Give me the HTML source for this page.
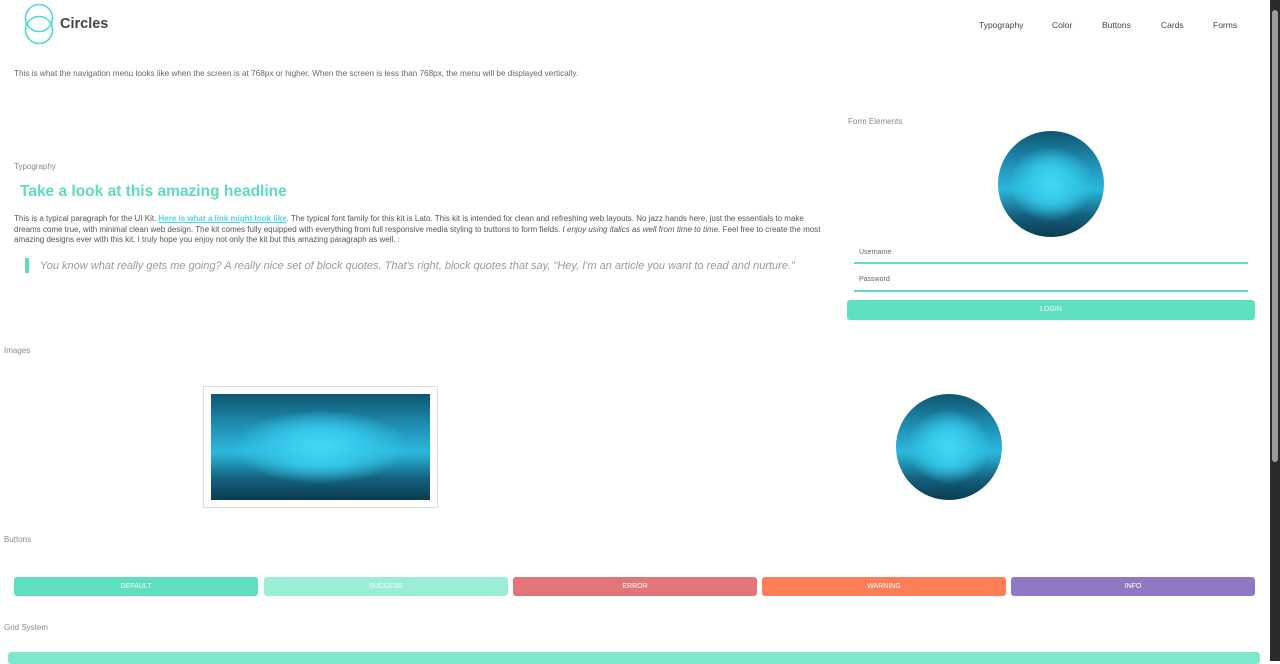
<!DOCTYPE html>
<html><head><meta charset="utf-8"><style>
*{margin:0;padding:0;box-sizing:border-box}
body{width:1280px;height:661px;overflow:hidden;background:#fff;font-family:"Liberation Sans",sans-serif;color:#666;position:relative}
.a{position:absolute;white-space:nowrap}
.lbl{font-size:8px;color:#888}
.wave{background:radial-gradient(ellipse 40% 35% at 50% 50%,#45d8f5 0%,#33c6e8 50%,transparent 100%),linear-gradient(180deg,#0e5670 0%,#1f8fb3 30%,#2bb8dc 55%,#14607c 80%,#0b3c52 100%)}
.btn{position:absolute;top:577px;height:19px;border-radius:3px;color:#fff;font-size:7px;text-align:center;line-height:19px;width:244px}
</style></head><body>
<svg class="a" style="left:23px;top:3px" width="32" height="43"><circle cx="16" cy="15" r="13.5" fill="none" stroke="#4dd4e8" stroke-width="1.6"/><circle cx="16" cy="27" r="13.5" fill="none" stroke="#4ddcc0" stroke-width="1.6"/></svg>
<div class="a" style="left:60px;top:16px;font-size:14.5px;font-weight:bold;color:#444">Circles</div>
<div class="a" style="left:979px;top:20px;font-size:8.5px;color:#444">Typography</div>
<div class="a" style="left:1052px;top:20px;font-size:8.5px;color:#444">Color</div>
<div class="a" style="left:1102px;top:20px;font-size:8.5px;color:#444">Buttons</div>
<div class="a" style="left:1161px;top:20px;font-size:8.5px;color:#444">Cards</div>
<div class="a" style="left:1213px;top:20px;font-size:8.5px;color:#444">Forms</div>
<div class="a" style="left:14px;top:69px;font-size:8.2px;color:#666">This is what the navigation menu looks like when the screen is at 768px or higher. When the screen is less than 768px, the menu will be displayed vertically.</div>
<div class="a lbl" style="left:14px;top:162px">Typography</div>
<div class="a" style="left:20px;top:183px;font-size:15.5px;font-weight:bold;color:#5ddbbe">Take a look at this amazing headline</div>
<div class="a" style="left:14px;top:214px;width:815px;white-space:normal;font-size:8px;line-height:10.5px;color:#555">This is a typical paragraph for the UI Kit. <u style="color:#4dd4e8;font-weight:bold">Here is what a link might look like</u>. The typical font family for this kit is Lato. This kit is intended for clean and refreshing web layouts. No jazz hands here, just the essentials to make dreams come true, with minimal clean web design. The kit comes fully equipped with everything from full responsive media styling to buttons to form fields. <i>I enjoy using italics as well from time to time.</i> Feel free to create the most amazing designs ever with this kit. I truly hope you enjoy not only the kit but this amazing paragraph as well. :</div>
<div class="a" style="left:25px;top:258px;width:4px;height:15px;background:#5ddbbe"></div>
<div class="a" style="left:40px;top:260px;font-size:11px;font-style:italic;color:#999">You know what really gets me going? A really nice set of block quotes. That's right, block quotes that say, "Hey, I'm an article you want to read and nurture."</div>
<div class="a lbl" style="left:848px;top:117px">Form Elements</div>
<div class="a wave" style="left:998px;top:131px;width:106px;height:106px;border-radius:50%"></div>
<div class="a" style="left:859px;top:249px;font-size:7px;color:#666">Username</div>
<div class="a" style="left:854px;top:262px;width:394px;height:2px;background:#5ddbbe"></div>
<div class="a" style="left:859px;top:276px;font-size:7px;color:#666">Password</div>
<div class="a" style="left:854px;top:290px;width:394px;height:2px;background:#5ddbbe"></div>
<div class="a" style="left:847px;top:300px;width:408px;height:20px;background:#5ddfc0;border-radius:3px;color:#fff;font-size:7px;text-align:center;line-height:20px">LOGIN</div>
<div class="a lbl" style="left:4px;top:346px">Images</div>
<div class="a" style="left:203px;top:386px;width:235px;height:122px;border:1px solid #ddd"></div>
<div class="a wave" style="left:211px;top:394px;width:219px;height:106px"></div>
<div class="a wave" style="left:896px;top:394px;width:106px;height:106px;border-radius:50%"></div>
<div class="a lbl" style="left:4px;top:535px">Buttons</div>
<div class="btn" style="left:14px;background:#5ddfc0">DEFAULT</div>
<div class="btn" style="left:264px;background:#9aeed8">SUCCESS</div>
<div class="btn" style="left:513px;background:#e37479">ERROR</div>
<div class="btn" style="left:762px;background:#fd7d56">WARNING</div>
<div class="btn" style="left:1011px;background:#9079c2">INFO</div>
<div class="a lbl" style="left:4px;top:623px">Grid System</div>
<div class="a" style="left:8px;top:652px;width:1252px;height:12px;background:#7fe8cc;border-radius:3px"></div>
<div class="a" style="left:1270px;top:0;width:10px;height:661px;background:#2b2b2b"></div>
<div class="a" style="left:1272px;top:10px;width:6px;height:452px;background:#9b9b9b;border-radius:3px"></div>
</body></html>
